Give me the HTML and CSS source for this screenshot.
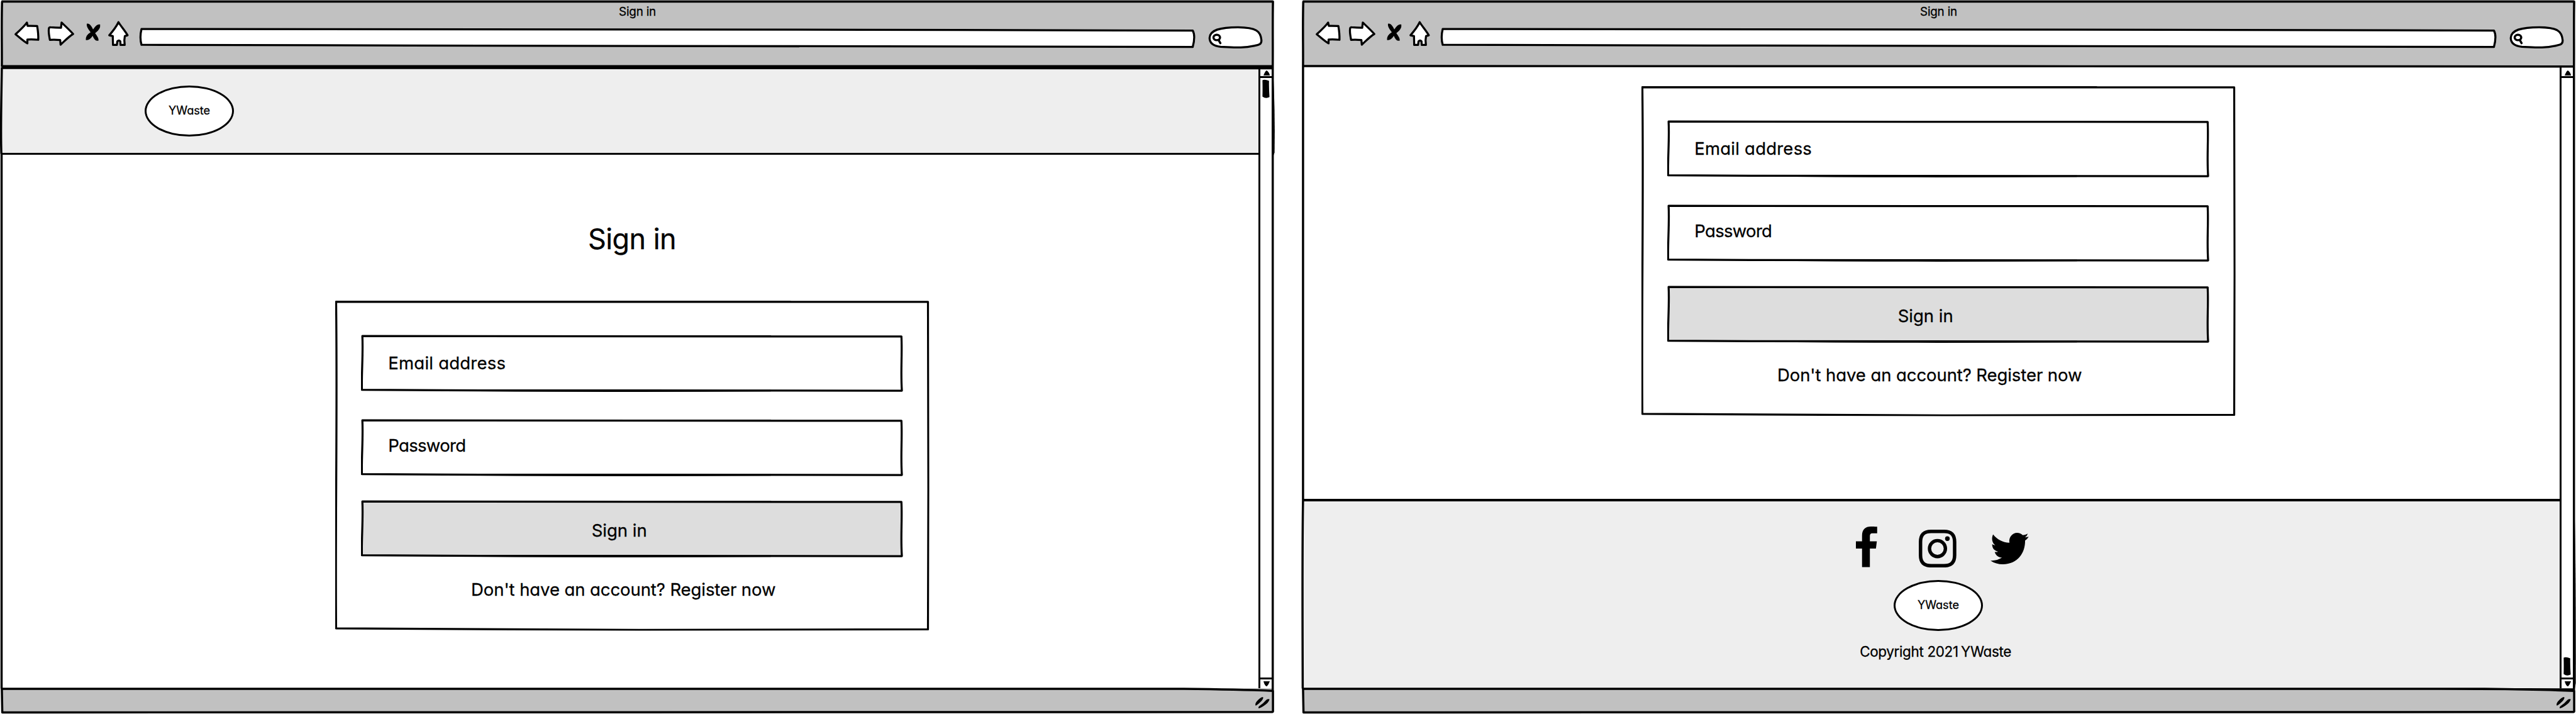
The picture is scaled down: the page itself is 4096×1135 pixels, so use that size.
FILE: index.html
```html
<!DOCTYPE html>
<html lang="en">
<head>
<meta charset="utf-8">
<title>Sign in</title>
<link rel="stylesheet" href="styles.css">
</head>
<body>
<svg class="defs" aria-hidden="true">
  <!-- hand-drawn outlines, stretched over the box they belong to -->
  <symbol id="sketch-card" viewBox="0 0 1306 727" preserveAspectRatio="none">
    <path class="ink" d="M2 4 C300 2 700 1 1303 4 C1303 200 1305 500 1303 724 C900 727 400 725 2 722 C0 500 5 250 2 4Z"/>
    <path class="ink thin" d="M2 3 C300 1 600 2 1000 3"/>
  </symbol>
  <symbol id="sketch-field" viewBox="0 0 1192 126" preserveAspectRatio="none">
    <path class="ink" d="M3 3 C300 1 700 2 1188 4 C1190 45 1186 80 1189 123 C800 125 400 124 2 121 C1 85 5 40 3 3Z"/>
    <path class="ink thin" d="M3 3.5 C300 2 600 4 900 3 M200 122 C500 125 700 124 900 123"/>
  </symbol>
  <symbol id="icon-back" viewBox="30 46 58 54">
    <path class="ink fill" d="M33.7 75.7 C40 70 54 57 58.7 50 L60.3 57.3 Q72 57 81.3 57.7 C83 68 84 78 83.7 87.8 Q70 86.5 59.7 87.3 L59.7 95.7 C50 90 42 82 33.7 75.7Z"/>
  </symbol>
  <symbol id="icon-forward" viewBox="104 46 60 57">
    <path class="ink fill" d="M111.6 60.3 Q122 61 134.4 61.5 L135.7 50 C142 56 153 66 161 75 C151 81 142 91 133.5 98.5 L132.6 88.2 Q120 87.5 110 88 C108 78 107 66 108 62 Q109 60 111.6 60.3Z"/>
  </symbol>
  <symbol id="icon-stop" viewBox="186 50 36 42">
    <path d="M190 52.500 Q197 50 204 65 Q212 52 219.500 54 Q221 64 208.500 73 Q217 84 216 89.500 Q208 92 203 79 Q196 90 188 88 Q187 78 198.500 71 Q189 60 190 52.500Z"/>
  </symbol>
  <symbol id="icon-home" viewBox="236 44 48 58">
    <path class="ink fill" d="M260 48.500 C265 57 275 68 280 77.300 L274 79 Q272 88 273.700 98.500 L264.500 98.500 L264 90.500 Q261 87.500 257.500 90.500 L256.500 98.500 L248 98.500 L247.500 79 L239.800 77.300 C247 69 255 59 260 48.500Z"/>
  </symbol>
  <symbol id="icon-address" viewBox="306 59 2322 48" preserveAspectRatio="none">
    <path class="ink fill" d="M311.500 63.300 C900 63.300 1500 63.500 1900 65 L2620.500 66.700 Q2627 78 2620.500 102.800 C1900 103 1300 101 900 99.500 L311.500 98 Q307 82 311.500 63.300Z"/>
  </symbol>
  <symbol id="icon-search" viewBox="2653 55 124 54">
    <path class="ink fill" d="M2657.500 83 C2658 66 2680 59.500 2720 59.500 C2760 60 2770 68 2771.500 88 C2772 97 2767 98 2755 100.500 C2730 106 2710 103.500 2682 102.500 C2668 101 2657.500 96 2657.500 83Z"/>
    <ellipse class="ink bold" cx="2673.300" cy="82" rx="7.200" ry="6"/>
    <path class="ink bold" d="M2677.500 88 L2681.300 94.500"/>
  </symbol>
  <symbol id="scroll-thumb" viewBox="0 0 17 42">
    <path d="M.5 2 Q6 -.5 15 3.500 Q14.500 20 16 39 Q8 43.500 .5 38 Q1 20 .5 2Z"/>
  </symbol>
  <symbol id="scroll-up" viewBox="0 0 14 11"><path d="M0 11 Q3 3 6 .3 Q8 -.3 9.500 2 Q13 5 14 11Z"/></symbol>
  <symbol id="scroll-down" viewBox="0 0 14 11"><path d="M0 0 H14 Q11.500 7 7.500 11 Q5 11 3 7.500 Q1 4 0 0Z"/></symbol>
</svg>

<div class="board">
  <section class="browser">
    <div class="toolbar">
      <div class="title">Sign in</div>
      <div class="controls">
        <svg class="back"><use href="#icon-back"/></svg>
        <svg class="forward"><use href="#icon-forward"/></svg>
        <svg class="stop"><use href="#icon-stop"/></svg>
        <svg class="home"><use href="#icon-home"/></svg>
        <svg class="address"><use href="#icon-address"/></svg>
        <svg class="search"><use href="#icon-search"/></svg>
      </div>
    </div>
    <div class="viewport">
      <div class="page">
        <header class="site-header"><div class="logo"><span>YWaste</span></div></header>
        <main class="main">
          <h1>Sign in</h1>
          <form class="card">
            <svg class="outline"><use href="#sketch-card"/></svg>
            <div class="field email"><svg class="outline"><use href="#sketch-field"/></svg><span>Email address</span></div>
            <div class="field password"><svg class="outline"><use href="#sketch-field"/></svg><span>Password</span></div>
            <div class="field submit"><svg class="outline"><use href="#sketch-field"/></svg><span>Sign in</span></div>
            <p class="register">Don't have an account? Register now</p>
          </form>
        </main>
      </div>
      <div class="scrollbar">
        <div class="step"><svg><use href="#scroll-up"/></svg></div>
        <div class="track"><svg><use href="#scroll-thumb"/></svg></div>
        <div class="step last"><svg><use href="#scroll-down"/></svg></div>
      </div>
    </div>
    <div class="statusbar"></div>
    <svg class="frame" viewBox="0 0 2800 1568">
      <path class="ink line" d="M3 3.400 H2796 C2795 50 2796 100 2795.500 147 M4.500 3 C3 60 4.500 100 4 147 M4 145.300 H2796 M4 149 C800 149.500 1800 148.800 2796 150 M2795.500 146 V1516 M4 148 C3 220 1 290 3 338 M3.500 338 V1512 M3 1512.700 H2600 Q2720 1514 2796 1517 M4 1512 L5 1564.300 C1000 1564.500 2000 1564.500 2794 1563.500 Q2796.500 1563 2796 1560 V1516"/>
      <path d="M2796 148 Q2801 240 2799.500 335 L2797 342Z"/>
      <path d="M2774 1530.500 Q2776.500 1534 2768 1542 Q2762 1548 2758 1549.500 Q2756 1546 2760 1540.500 Q2768 1531 2774 1530.500Z M2788.500 1535.500 Q2787 1543 2776 1550 Q2769 1555 2764.500 1555.500 Q2762.500 1552 2769 1548 Q2774 1545 2780 1538 Q2784 1533.500 2788.500 1535.500Z"/>
    </svg>
  </section>

  <section class="browser">
    <div class="toolbar">
      <div class="title">Sign in</div>
      <div class="controls">
        <svg class="back"><use href="#icon-back"/></svg>
        <svg class="forward"><use href="#icon-forward"/></svg>
        <svg class="stop"><use href="#icon-stop"/></svg>
        <svg class="home"><use href="#icon-home"/></svg>
        <svg class="address"><use href="#icon-address"/></svg>
        <svg class="search"><use href="#icon-search"/></svg>
      </div>
    </div>
    <div class="viewport">
      <div class="page scrolled">
        <main class="main">
          <form class="card">
            <svg class="outline"><use href="#sketch-card"/></svg>
            <div class="field email"><svg class="outline"><use href="#sketch-field"/></svg><span>Email address</span></div>
            <div class="field password"><svg class="outline"><use href="#sketch-field"/></svg><span>Password</span></div>
            <div class="field submit"><svg class="outline"><use href="#sketch-field"/></svg><span>Sign in</span></div>
            <p class="register">Don't have an account? Register now</p>
          </form>
        </main>
        <footer class="site-footer">
          <div class="social">
            <svg class="facebook" viewBox="0 0 47 89"><path d="M13.500 89 V48.300 H0 V32.300 H13.500 V20 C13.500 6 21 0 33 0 C38 0 46.700 .5 46.700 .5 V15 H36 C32 15 30.700 17.500 30.700 21 V32.300 H46 L44 48.300 H30.700 V89Z"/></svg>
            <svg class="instagram" viewBox="0 0 82.500 83"><path fill="none" stroke="#000" stroke-width="7.600" d="M27 3.800 H55.500 C71 3.800 78.700 11 78.700 27 V56 C78.700 72 71 79.200 55.500 79.200 H27 C11.500 79.200 3.800 72 3.800 56 V27 C3.800 11 11.500 3.800 27 3.800Z"/><circle cx="41" cy="41.500" r="17.500" fill="none" stroke="#000" stroke-width="7.400"/><circle cx="62.800" cy="19.600" r="5.100"/></svg>
            <svg class="twitter" viewBox="0 0 252 207" preserveAspectRatio="none"><path d="M0 183 Q43 185 76 163 C53 161 35 150 28 126 Q40 128 50 124 C26 118 11 104 11 75 Q20 81 32 82 C10 66 5 36 17 10 C45 44 80 63 125 65 C118 30 145 0 175 0 Q198 0 213 16 Q230 13 246 5 Q241 20 227 30 Q240 29 252 26 Q242 42 228 51 C230 130 180 207 82 207 Q35 207 0 183Z"/></svg>
          </div>
          <div class="logo"><span>YWaste</span></div>
          <p class="copyright"><span>Copyright</span> <span>2021</span><span class="name">YWaste</span></p>
        </footer>
      </div>
      <div class="scrollbar at-end">
        <div class="step"><svg><use href="#scroll-up"/></svg></div>
        <div class="track"><svg><use href="#scroll-thumb"/></svg></div>
        <div class="step last"><svg><use href="#scroll-down"/></svg></div>
      </div>
    </div>
    <div class="statusbar"></div>
    <svg class="frame" viewBox="0 0 2800 1568">
      <path class="ink line" d="M3 3.400 H2796 C2795 50 2796 100 2795.500 147 M4.500 3 C3 60 4.500 100 4 147 M4 145 C300 146 2000 145 2796 146 M2795.500 146 V1516 M4 146 V1100 M4 1098 C2 1200 3 1400 3.300 1512 M3 1512.700 H2600 Q2720 1514 2796 1517 M2500 1512.500 L2796 1514 M4 1512 L5 1564.300 C1000 1564.500 2000 1564.500 2794 1563.500 Q2796.500 1563 2796 1560 V1516"/>
      <path d="M2796 1098 Q2800 1200 2799.500 1500 L2796 1520Z"/>
      <path d="M2774 1530.500 Q2776.500 1534 2768 1542 Q2762 1548 2758 1549.500 Q2756 1546 2760 1540.500 Q2768 1531 2774 1530.500Z M2788.500 1535.500 Q2787 1543 2776 1550 Q2769 1555 2764.500 1555.500 Q2762.500 1552 2769 1548 Q2774 1545 2780 1538 Q2784 1533.500 2788.500 1535.500Z"/>
    </svg>
  </section>
</div>
</body>
</html>
```
FILE: styles.css
```css
/* 1rem is ten drawing units */
html { font-size: 7.2393px; }
* { box-sizing: border-box; }
body {
  margin: 0;
  background: #fff;
  color: #000;
  font-family: Inter, "Liberation Sans", sans-serif;
  font-feature-settings: "cv11";
  font-weight: 400;
  -webkit-text-stroke: .3px #000;
  line-height: 1;
  overflow: hidden;
}
h1, p { margin: 0; font-weight: inherit; white-space: nowrap; }
svg { display: block; }
.defs { display: none; }

.ink { fill: none; stroke: #000; stroke-width: 4.5; stroke-linecap: round; stroke-linejoin: round; }
.ink.fill { fill: #fff; }
.ink.thin { stroke-width: 3.5; }
.ink.bold { stroke-width: 4.8; }
.ink.line { stroke-width: 4.8; stroke-linecap: butt; }

.board { display: flex; gap: 5.8rem; width: 565.8rem; height: 156.8rem; }
.browser { position: relative; display: flex; flex-direction: column; width: 280rem; height: 156.8rem; flex: none; }
.frame { position: absolute; inset: 0; width: 100%; height: 100%; overflow: visible; pointer-events: none; }

.toolbar { height: 14.6rem; margin: 0 .4rem; padding-top: 1.4rem; background: #c1c1c1; flex: none; }
.title { text-align: center; font-size: 2.6rem; letter-spacing: -.01em; }
.controls { display: flex; align-items: flex-start; padding-top: .4rem; padding-left: 2.6rem; }
.controls svg { flex: none; }
.back { width: 5.8rem; height: 5.4rem; margin-top: .2rem; }
.forward { width: 6rem; height: 5.7rem; margin: .2rem 0 0 1.6rem; }
.stop { width: 3.6rem; height: 4.2rem; margin: .6rem 0 0 2.2rem; }
.home { width: 4.8rem; height: 5.8rem; margin-left: 1.4rem; }
.address { width: 232.2rem; height: 4.8rem; margin: 1.5rem 0 0 2.2rem; }
.search { width: 12.4rem; height: 5.4rem; margin: 1.1rem 0 0 2.5rem; }

.viewport { display: flex; flex: 1; min-height: 0; }
.page { display: flex; flex-direction: column; width: 276.45rem; }
.site-header { height: 19.45rem; margin-left: .3rem; padding: 4.2rem 0 0 31.5rem; background: #eee; border-bottom: 3px solid #000; }
.logo { display: flex; align-items: center; justify-content: center; width: 19.6rem; height: 11.2rem; padding-bottom: .5rem; background: #fff; border: 3px solid #000; border-radius: 50%; font-size: 2.5rem; }

.main { display: flex; flex-direction: column; align-items: center; padding-left: 1.2rem; flex: 1; }
h1 { padding-top: 15.4rem; font-size: 6.2rem; letter-spacing: -.012em; }
.card { position: relative; width: 130.5rem; height: 72.6rem; margin-top: 10.3rem; padding: 7.6rem 5.7rem 0; }
.outline { position: absolute; inset: 0; width: 100%; height: 100%; overflow: visible; }
.field { position: relative; display: flex; align-items: center; height: 12.6rem; padding-left: 6rem; font-size: 3.8rem; }
.email { letter-spacing: .008em; }
.password { margin-top: 5.8rem; padding-bottom: .7rem; letter-spacing: -.025em; }
.submit { margin-top: 5.3rem; padding: .7rem 5.6rem 0 0; justify-content: center; background: linear-gradient(#ddd, #ddd) center / calc(100% - .6rem) calc(100% - .6rem) no-repeat; }
.register { margin-top: 5.2rem; padding-right: 3.8rem; text-align: center; font-size: 3.8rem; letter-spacing: -.003em; }

.scrolled .main { padding-left: 3.4rem; }
.scrolled .card { margin-top: 4.25rem; }
.site-footer { display: flex; flex-direction: column; align-items: center; height: 41.6rem; margin-left: .4rem; padding-left: 3rem; background: #eee; border-top: 4px solid #000; }
.social { display: flex; align-items: flex-end; padding: 5.6rem 0 0 1.8rem; }
.facebook { width: 4.7rem; height: 8.9rem; }
.instagram { width: 8.25rem; height: 8.3rem; margin-left: 9.2rem; }
.twitter { width: 8.4rem; height: 6.9rem; margin: 0 0 .65rem 7.5rem; }
.site-footer .logo { margin-top: 2.8rem; flex: none; }
.copyright { margin-top: 3rem; padding-right: 1.2rem; font-size: 3.1rem; letter-spacing: -.015em; }
.name { margin-left: .6rem; }

.scrollbar { display: flex; flex-direction: column; width: 3.1rem; padding-top: .6rem; border-left: 3px solid #000; background: #fff; }
.step { height: 2rem; padding: .3rem 0 0 .65rem; border-bottom: 3px solid #000; flex: none; }
.step svg { width: 1.4rem; height: 1.1rem; }
.step.last { height: 2.4rem; padding-top: .8rem; border-bottom: 0; border-top: 3px solid #000; }
.step.last svg { margin-top: -.3rem; }
.track { flex: 1; padding: .25rem 0 0 .4rem; }
.track svg { width: 1.7rem; height: 4.2rem; }
.at-end .track { display: flex; flex-direction: column; justify-content: flex-end; padding-bottom: .3rem; }
.statusbar { height: 5.4rem; margin: 0 .4rem .3rem; background: #c1c1c1; flex: none; }
```
